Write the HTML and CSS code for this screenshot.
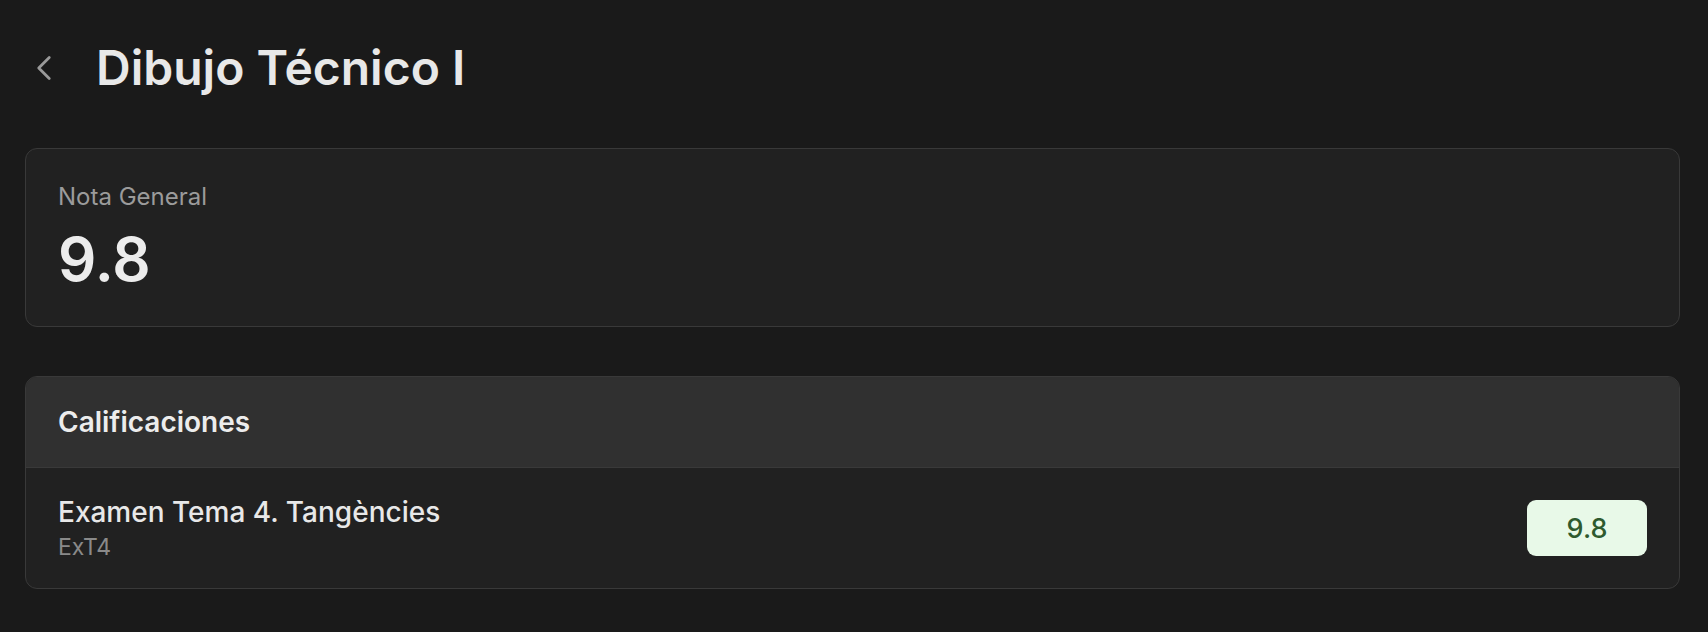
FILE: index.html
```html
<!DOCTYPE html>
<html lang="es">
<head>
<meta charset="utf-8">
<title>Dibujo Técnico I</title>
<link rel="stylesheet" href="styles.css">
</head>
<body>
<div class="page">
  <header class="header">
    <button class="back" aria-label="Volver">
      <svg viewBox="0 0 24 24" width="42" height="42" fill="none" stroke="currentColor" stroke-width="1.6" stroke-linecap="round" stroke-linejoin="round"><path d="M15 18l-6-6 6-6"/></svg>
    </button>
    <h1 class="title">Dibujo Técnico I</h1>
  </header>

  <section class="card summary">
    <div class="summary-label">Nota General</div>
    <div class="summary-value">9.8</div>
  </section>

  <section class="card grades">
    <div class="grades-head">Calificaciones</div>
    <div class="grade-row">
      <div class="grade-info">
        <div class="grade-name">Examen Tema 4. Tangències</div>
        <div class="grade-code">ExT4</div>
      </div>
      <div class="badge">9.8</div>
    </div>
  </section>
</div>
</body>
</html>
```

FILE: styles.css
```css
* { box-sizing: border-box; }
html, body {
  margin: 0;
  background: #1a1a1a;
}
body {
  font-family: Inter, "Noto Sans", "Liberation Sans", sans-serif;
  color: #e8e8e8;
}
.page {
  padding: 47px 28px 0 25px;
}
.header {
  display: flex;
  align-items: center;
  height: 42px;
  margin: 0 0 59px -2px;
}
.back {
  width: 42px;
  height: 42px;
  padding: 0;
  border: 0;
  background: none;
  color: #9a9a9a;
  display: flex;
  align-items: center;
  justify-content: center;
  cursor: pointer;
}
.back svg { display: block; }
.title {
  margin: 0 0 0 31px;
  font-size: 48px;
  line-height: 48px;
  font-weight: 600;
  color: #e8e8e8;
}
.card {
  background: #212121;
  border: 1px solid #393939;
  border-radius: 12px;
}
.summary {
  padding: 30px 32px 31px;
}
.summary-label {
  font-size: 24px;
  line-height: 36px;
  color: #9b9b9b;
}
.summary-value {
  margin-top: 8px;
  font-size: 60px;
  line-height: 72px;
  font-weight: 600;
  color: #ececec;
}
.grades {
  margin-top: 49px;
  overflow: hidden;
}
.grades-head {
  height: 91px;
  display: flex;
  align-items: center;
  padding: 0 32px;
  background: #303030;
  border-bottom: 1px solid #393939;
  font-size: 28px;
  font-weight: 600;
  color: #ececec;
}
.grade-row {
  height: 120px;
  display: flex;
  align-items: center;
  justify-content: space-between;
  padding: 0 32px;
}
.grade-name {
  font-size: 28px;
  line-height: 38px;
  font-weight: 500;
  color: #e8e8e8;
}
.grade-code {
  font-size: 23px;
  line-height: 32px;
  color: #8a8a8a;
}
.badge {
  width: 120px;
  height: 56px;
  border-radius: 9px;
  background: #e8f9e8;
  color: #2e5a2e;
  font-size: 27px;
  font-weight: 500;
  display: flex;
  align-items: center;
  justify-content: center;
}
```
